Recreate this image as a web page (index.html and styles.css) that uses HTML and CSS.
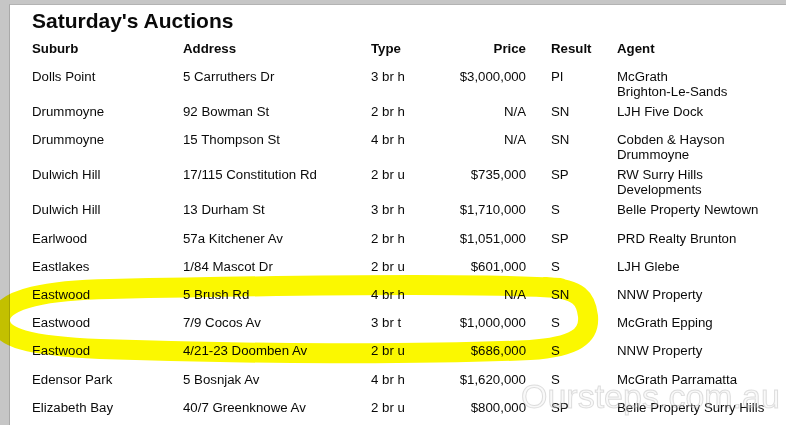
FILE: index.html
```html
<!DOCTYPE html>
<html lang="en">
<head>
    <meta charset="UTF-8">
    <meta name="viewport" content="width=device-width, initial-scale=1.0">
    <title>Saturday's Auctions</title>
    <link rel="stylesheet" href="styles.css">
</head>
<body>
    <div class="page">
        <h2>Saturday's Auctions</h2>
        <table class="results">
            <tr>
                <th class="suburb">Suburb</th>
                <th class="address">Address</th>
                <th class="type">Type</th>
                <th class="price">Price</th>
                <th class="result">Result</th>
                <th class="agent">Agent</th>
            </tr>
            <tr><td>Dolls Point</td><td>5 Carruthers Dr</td><td>3 br h</td><td class="price">$3,000,000</td><td class="result">PI</td><td>McGrath <span class="nowrap">Brighton-Le-Sands</span></td></tr>
            <tr><td>Drummoyne</td><td>92 Bowman St</td><td>2 br h</td><td class="price">N/A</td><td class="result">SN</td><td>LJH Five Dock</td></tr>
            <tr><td>Drummoyne</td><td>15 Thompson St</td><td>4 br h</td><td class="price">N/A</td><td class="result">SN</td><td>Cobden &amp; Hayson Drummoyne</td></tr>
            <tr><td>Dulwich Hill</td><td>17/115 Constitution Rd</td><td>2 br u</td><td class="price">$735,000</td><td class="result">SP</td><td>RW Surry Hills Developments</td></tr>
            <tr><td>Dulwich Hill</td><td>13 Durham St</td><td>3 br h</td><td class="price">$1,710,000</td><td class="result">S</td><td>Belle Property Newtown</td></tr>
            <tr><td>Earlwood</td><td>57a Kitchener Av</td><td>2 br h</td><td class="price">$1,051,000</td><td class="result">SP</td><td>PRD Realty Brunton</td></tr>
            <tr><td>Eastlakes</td><td>1/84 Mascot Dr</td><td>2 br u</td><td class="price">$601,000</td><td class="result">S</td><td>LJH Glebe</td></tr>
            <tr><td>Eastwood</td><td>5 Brush Rd</td><td>4 br h</td><td class="price">N/A</td><td class="result">SN</td><td>NNW Property</td></tr>
            <tr><td>Eastwood</td><td>7/9 Cocos Av</td><td>3 br t</td><td class="price">$1,000,000</td><td class="result">S</td><td>McGrath Epping</td></tr>
            <tr><td>Eastwood</td><td>4/21-23 Doomben Av</td><td>2 br u</td><td class="price">$686,000</td><td class="result">S</td><td>NNW Property</td></tr>
            <tr><td>Edensor Park</td><td>5 Bosnjak Av</td><td>4 br h</td><td class="price">$1,620,000</td><td class="result">S</td><td>McGrath Parramatta</td></tr>
            <tr><td>Elizabeth Bay</td><td>40/7 Greenknowe Av</td><td>2 br u</td><td class="price">$800,000</td><td class="result">SP</td><td>Belle Property Surry Hills</td></tr>
        </table>
    </div>

    <svg class="highlight" width="786" height="425" viewBox="0 0 786 425">
        <path d="M 560 288 C 480 283, 300 285, 110 289 C 50 290, 2 298, 0 319 C -2 338, 30 346, 100 349 C 250 354, 420 355, 530 350 C 575 347, 590 336, 588 316 C 586 299, 580 289, 545 287"
              fill="none" stroke="#fbf800" stroke-width="20" stroke-linecap="round" stroke-linejoin="round"/>
    </svg>

    <div class="watermark">Oursteps.com.au</div>
</body>
</html>
```

FILE: styles.css
```css
body {
    margin: 0;
    background: #c6c6c6;
    font-family: "Liberation Sans", Arial, sans-serif;
    color: #0a0a0a;
    overflow: hidden;
    height: 425px;
}
.page {
    margin: 4px 0 0 9px;
    background: #fff;
    border-left: 1px solid #a9a9a9;
    border-top: 1px solid #b3b3b3;
    height: 430px;
    padding-top: 4px;
}
h2 {
    margin: 0 0 6px 22px;
    font-size: 21px;
    line-height: 24px;
    font-weight: bold;
}
.results {
    margin-left: 22px;
    border-collapse: collapse;
    table-layout: fixed;
    font-size: 13.25px;
    line-height: 14.5px;
}
th, td {
    box-sizing: border-box;
    padding: 3px 0;
    height: 28.2px;
    text-align: left;
    vertical-align: top;
}
th {
    font-weight: bold;
}
.suburb { width: 151px; }
.address { width: 188px; }
.type { width: 85px; }
.price { width: 70px; text-align: right; }
.result { width: 91px; padding-left: 25px; }
.agent { width: 155px; }
.nowrap { white-space: nowrap; }
.highlight {
    position: absolute;
    left: 0;
    top: 0;
    mix-blend-mode: multiply;
    pointer-events: none;
}
.watermark {
    position: absolute;
    left: 521px;
    top: 379px;
    font-size: 34px;
    line-height: 34px;
    font-family: "Liberation Sans", Arial, sans-serif;
    color: rgba(235, 235, 235, 0.3);
    -webkit-text-stroke: 1px rgba(150, 150, 150, 0.3);
    white-space: nowrap;
    pointer-events: none;
}
```
